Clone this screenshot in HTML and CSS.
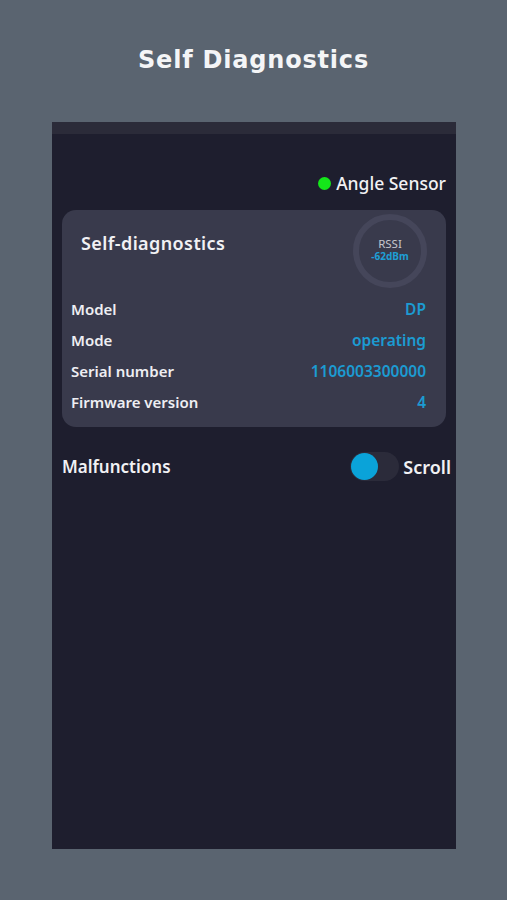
FILE: index.html
```html
<!DOCTYPE html>
<html lang="en">
<head>
<meta charset="utf-8">
<title>Self Diagnostics</title>
<link rel="stylesheet" href="styles.css">
</head>
<body>
<header class="page-title">Self Diagnostics</header>
<main class="frame">
  <div class="frame-top"></div>
  <div class="frame-body">
    <div class="sensor-line">
      <span class="dot"></span>
      <span class="sensor-name">Angle Sensor</span>
    </div>
    <section class="card">
      <div class="card-head">
        <h2 class="card-title">Self-diagnostics</h2>
        <div class="rssi">
          <span class="rssi-label">RSSI</span>
          <span class="rssi-value">-62dBm</span>
        </div>
      </div>
      <dl class="rows">
        <div class="row"><dt>Model</dt><dd>DP</dd></div>
        <div class="row"><dt>Mode</dt><dd>operating</dd></div>
        <div class="row"><dt>Serial number</dt><dd>1106003300000</dd></div>
        <div class="row"><dt>Firmware version</dt><dd>4</dd></div>
      </dl>
    </section>
    <div class="malf">
      <span class="malf-label">Malfunctions</span>
      <div class="scroll-ctl">
        <span class="toggle"><span class="knob"></span></span>
        <span class="scroll-label">Scroll</span>
      </div>
    </div>
  </div>
</main>
</body>
</html>
```
FILE: styles.css
```css
* { box-sizing: border-box; }
html, body { margin: 0; padding: 0; }
body {
  width: 507px;
  height: 900px;
  background: #5a6470;
  font-family: "Noto Sans", "Open Sans", sans-serif;
  color: #ffffff;
  overflow: hidden;
}
.page-title {
  height: 122px;
  padding-top: 43px;
  text-align: center;
  font-family: "DejaVu Sans", sans-serif;
  font-weight: bold;
  font-size: 24px;
  letter-spacing: 0.8px;
  line-height: 34px;
  color: #f4f5f7;
}
.frame {
  margin-left: 52px;
  width: 404px;
  height: 727px;
  background: #1e1e2e;
  display: flex;
  flex-direction: column;
  overflow: visible;
}
.frame-top {
  height: 12px;
  background: #2b2b39;
}
.frame-body {
  padding: 37px 10px 0 10px;
  display: flex;
  flex-direction: column;
}
.sensor-line {
  display: flex;
  align-items: center;
  justify-content: flex-end;
  gap: 5px;
  height: 24px;
}
.dot {
  width: 13px;
  height: 13px;
  border-radius: 50%;
  background: #14e61a;
}
.sensor-name {
  font-size: 17.5px;
  font-weight: 500;
  color: #f2f2f4;
  line-height: 24px;
}
.card {
  margin-top: 15px;
  background: #393a4c;
  border-radius: 14px;
  padding: 4px 20px 12px 9px;
  height: 217px;
}
.card-head {
  display: flex;
  justify-content: space-between;
  align-items: flex-start;
}
.card-title {
  margin: 18px 0 0 10px;
  font-size: 18px;
  font-weight: 600;
  line-height: 22px;
  letter-spacing: 0.4px;
  color: #f1f1f4;
}
.rssi {
  width: 74px;
  height: 74px;
  border-radius: 50%;
  border: 6px solid #45465a;
  display: flex;
  flex-direction: column;
  align-items: center;
  justify-content: center;
  margin-right: -1px;
}
.rssi-label {
  font-size: 11.5px;
  line-height: 13px;
  color: #c4c5cc;
  margin-top: -3px;
}
.rssi-value {
  font-size: 10px;
  line-height: 12px;
  font-weight: 700;
  color: #1e9fd6;
}
.rows {
  margin: 5px 0 0 0;
  display: flex;
  flex-direction: column;
}
.row {
  display: flex;
  justify-content: space-between;
  align-items: center;
  height: 31px;
}
.row dt {
  font-size: 15px;
  font-weight: 600;
  color: #eeeef2;
}
.row dd {
  margin: 0;
  font-size: 15.5px;
  font-weight: 600;
  color: #1c9bd2;
}
.malf {
  margin-top: 25px;
  display: flex;
  justify-content: space-between;
  align-items: center;
  margin-right: -5px;
}
.malf-label {
  font-size: 17px;
  font-weight: 600;
  color: #f1f1f4;
}
.scroll-ctl {
  display: flex;
  align-items: center;
  gap: 4px;
}
.toggle {
  width: 49px;
  height: 29px;
  border-radius: 15px;
  background: #2b2b3a;
  display: flex;
  align-items: center;
  padding-left: 1px;
}
.knob {
  width: 27px;
  height: 27px;
  border-radius: 50%;
  background: #0aa3d9;
}
.scroll-label {
  font-size: 18px;
  font-weight: 600;
  color: #f1f1f4;
}
```
